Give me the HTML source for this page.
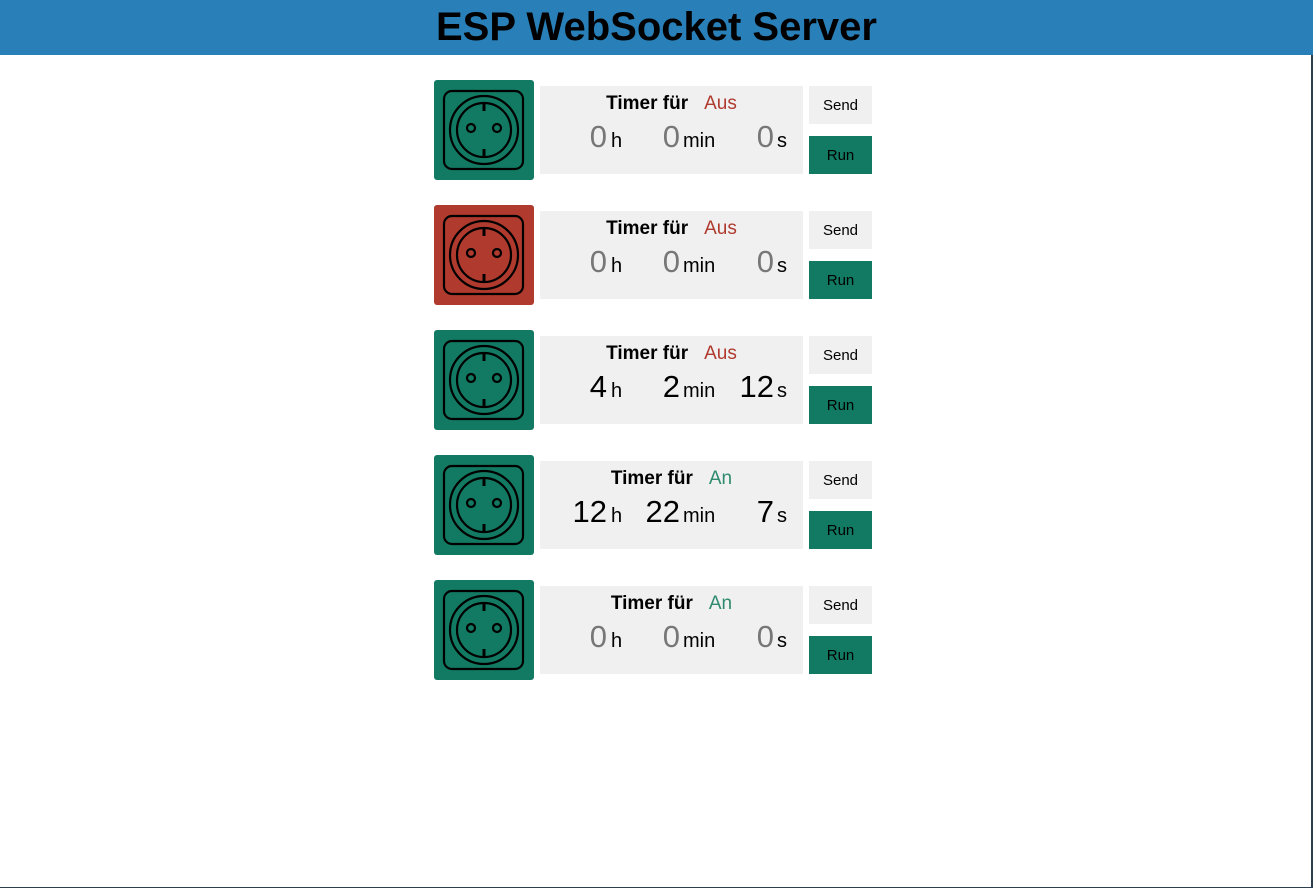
<!DOCTYPE html>
<html><head><meta charset="utf-8"><style>
*{margin:0;padding:0;box-sizing:border-box}
body{width:1313px;height:888px;background:#fff;font-family:"Liberation Sans",Arial,sans-serif;position:relative;overflow:hidden}
.hdr{position:absolute;left:0;top:0;width:1313px;height:55px;background:#2980b9;text-align:center;font-weight:bold;font-size:40px;line-height:55px;color:#000}
.brd{position:absolute;right:0;top:55px;width:2px;height:833px;background:#2c3e50}
.brdb{position:absolute;left:0;bottom:0;width:1313px;height:1px;background:#2c3e50}
.row{position:absolute;left:434px;width:440px;height:100px}
.ico{position:absolute;left:0;top:0;width:100px;height:100px;border-radius:3px}
.pan{position:absolute;left:106px;top:6px;width:263px;height:88px;background:#f0f0f0}
.ttl{position:absolute;left:0;top:7px;width:263px;text-align:center;font-size:19px}
.ttl b{margin-right:16px}
.n{position:absolute;top:33px;font-size:31px;text-align:right;width:60px}
.u{position:absolute;top:44px;font-size:20px}
.btn{position:absolute;left:375px;width:63px;height:38px;text-align:center;line-height:40px;font-size:15px}
.s{top:6px;background:#f0f0f0}.r{top:56px;background:#127a62}
</style></head><body>
<div class="hdr">ESP WebSocket Server</div>
<div class="brd"></div><div class="brdb"></div>

<div class="row" style="top:80px">
<svg class="ico" style="background:#127a62" viewBox="0 0 100 100"><g fill="none" stroke="#000" stroke-width="2.2"><rect x="10" y="11" width="79" height="78" rx="8"/><circle cx="50" cy="50" r="34"/><circle cx="50" cy="50" r="27"/><circle cx="37" cy="48" r="4"/><circle cx="63" cy="48" r="4"/></g><g stroke="#000" stroke-width="3"><line x1="50" y1="23" x2="50" y2="31"/><line x1="50" y1="69" x2="50" y2="77"/></g></svg>
<div class="pan"><div class="ttl"><b>Timer für</b><span style="color:#b03a2e">Aus</span></div>
<span class="n" style="left:7px;color:#777">0</span><span class="u" style="left:71px">h</span>
<span class="n" style="left:80px;color:#777">0</span><span class="u" style="left:143px">min</span>
<span class="n" style="left:174px;color:#777">0</span><span class="u" style="left:237px">s</span></div>
<div class="btn s">Send</div><div class="btn r">Run</div></div>

<div class="row" style="top:205px">
<svg class="ico" style="background:#b03a2e" viewBox="0 0 100 100"><g fill="none" stroke="#000" stroke-width="2.2"><rect x="10" y="11" width="79" height="78" rx="8"/><circle cx="50" cy="50" r="34"/><circle cx="50" cy="50" r="27"/><circle cx="37" cy="48" r="4"/><circle cx="63" cy="48" r="4"/></g><g stroke="#000" stroke-width="3"><line x1="50" y1="23" x2="50" y2="31"/><line x1="50" y1="69" x2="50" y2="77"/></g></svg>
<div class="pan"><div class="ttl"><b>Timer für</b><span style="color:#b03a2e">Aus</span></div>
<span class="n" style="left:7px;color:#777">0</span><span class="u" style="left:71px">h</span>
<span class="n" style="left:80px;color:#777">0</span><span class="u" style="left:143px">min</span>
<span class="n" style="left:174px;color:#777">0</span><span class="u" style="left:237px">s</span></div>
<div class="btn s">Send</div><div class="btn r">Run</div></div>

<div class="row" style="top:330px">
<svg class="ico" style="background:#127a62" viewBox="0 0 100 100"><g fill="none" stroke="#000" stroke-width="2.2"><rect x="10" y="11" width="79" height="78" rx="8"/><circle cx="50" cy="50" r="34"/><circle cx="50" cy="50" r="27"/><circle cx="37" cy="48" r="4"/><circle cx="63" cy="48" r="4"/></g><g stroke="#000" stroke-width="3"><line x1="50" y1="23" x2="50" y2="31"/><line x1="50" y1="69" x2="50" y2="77"/></g></svg>
<div class="pan"><div class="ttl"><b>Timer für</b><span style="color:#b03a2e">Aus</span></div>
<span class="n" style="left:7px">4</span><span class="u" style="left:71px">h</span>
<span class="n" style="left:80px">2</span><span class="u" style="left:143px">min</span>
<span class="n" style="left:174px">12</span><span class="u" style="left:237px">s</span></div>
<div class="btn s">Send</div><div class="btn r">Run</div></div>

<div class="row" style="top:455px">
<svg class="ico" style="background:#127a62" viewBox="0 0 100 100"><g fill="none" stroke="#000" stroke-width="2.2"><rect x="10" y="11" width="79" height="78" rx="8"/><circle cx="50" cy="50" r="34"/><circle cx="50" cy="50" r="27"/><circle cx="37" cy="48" r="4"/><circle cx="63" cy="48" r="4"/></g><g stroke="#000" stroke-width="3"><line x1="50" y1="23" x2="50" y2="31"/><line x1="50" y1="69" x2="50" y2="77"/></g></svg>
<div class="pan"><div class="ttl"><b>Timer für</b><span style="color:#2e8b6f">An</span></div>
<span class="n" style="left:7px">12</span><span class="u" style="left:71px">h</span>
<span class="n" style="left:80px">22</span><span class="u" style="left:143px">min</span>
<span class="n" style="left:174px">7</span><span class="u" style="left:237px">s</span></div>
<div class="btn s">Send</div><div class="btn r">Run</div></div>

<div class="row" style="top:580px">
<svg class="ico" style="background:#127a62" viewBox="0 0 100 100"><g fill="none" stroke="#000" stroke-width="2.2"><rect x="10" y="11" width="79" height="78" rx="8"/><circle cx="50" cy="50" r="34"/><circle cx="50" cy="50" r="27"/><circle cx="37" cy="48" r="4"/><circle cx="63" cy="48" r="4"/></g><g stroke="#000" stroke-width="3"><line x1="50" y1="23" x2="50" y2="31"/><line x1="50" y1="69" x2="50" y2="77"/></g></svg>
<div class="pan"><div class="ttl"><b>Timer für</b><span style="color:#2e8b6f">An</span></div>
<span class="n" style="left:7px;color:#777">0</span><span class="u" style="left:71px">h</span>
<span class="n" style="left:80px;color:#777">0</span><span class="u" style="left:143px">min</span>
<span class="n" style="left:174px;color:#777">0</span><span class="u" style="left:237px">s</span></div>
<div class="btn s">Send</div><div class="btn r">Run</div></div>
</body></html>
